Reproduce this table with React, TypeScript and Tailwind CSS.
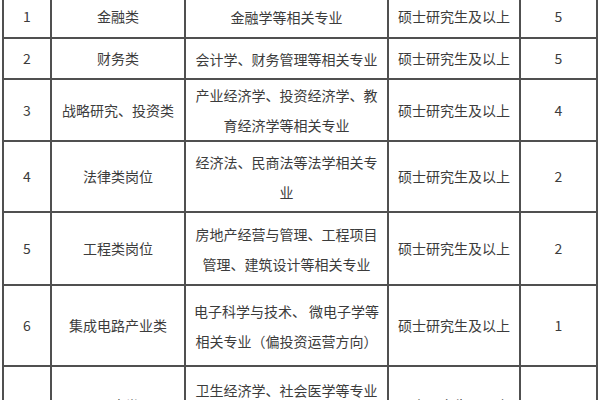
const rows = [
  { no: '1', cat: '金融类', major: ['金融学等相关专业'], edu: '硕士研究生及以上', num: '5', h: 'h-[43px]' },
  { no: '2', cat: '财务类', major: ['会计学、财务管理等相关专业'], edu: '硕士研究生及以上', num: '5', h: 'h-[41px]' },
  { no: '3', cat: '战略研究、投资类', major: ['产业经济学、投资经济学、教', '育经济学等相关专业'], edu: '硕士研究生及以上', num: '4', h: 'h-[62px]' },
  { no: '4', cat: '法律类岗位', major: ['经济法、民商法等法学相关专', '业'], edu: '硕士研究生及以上', num: '2', h: 'h-[71px]' },
  { no: '5', cat: '工程类岗位', major: ['房地产经营与管理、工程项目', '管理、建筑设计等相关专业'], edu: '硕士研究生及以上', num: '2', h: 'h-[73px]' },
  { no: '6', cat: '集成电路产业类', major: ['电子科学与技术、 微电子学等', '相关专业（偏投资运营方向）'], edu: '硕士研究生及以上', num: '1', h: 'h-[81px]' },
  { no: '7', cat: '医疗类', major: ['卫生经济学、社会医学等专业', '相关专业'], edu: '硕士研究生及以上', num: '1', h: 'h-[78px]' },
];

const cell = 'flex flex-col items-center justify-center border-r-2 border-[#505050] text-center';

export default function App() {
  return (
    <div
      className="h-[400px] w-[600px] overflow-hidden bg-white text-[14px] text-[#3c3c3c]"
      style={{ fontFamily: '"Noto Sans CJK SC", "Noto Sans", sans-serif' }}
    >
      <div className="ml-[2px] mt-[-4px] w-[596px] border-l-2 border-[#505050]">
        {rows.map((r) => (
          <div
            key={r.no}
            className={`grid grid-cols-[48px_134px_203px_132px_77px] border-b-2 border-[#505050] ${r.h}`}
          >
            <div className={cell}>{r.no}</div>
            <div className={cell}>{r.cat}</div>
            <div className={`${cell} leading-[30px]`}>
              {r.major.map((m) => (
                <span key={m} className="whitespace-pre">{m}</span>
              ))}
            </div>
            <div className={cell}>{r.edu}</div>
            <div className={cell}>{r.num}</div>
          </div>
        ))}
      </div>
    </div>
  );
}
